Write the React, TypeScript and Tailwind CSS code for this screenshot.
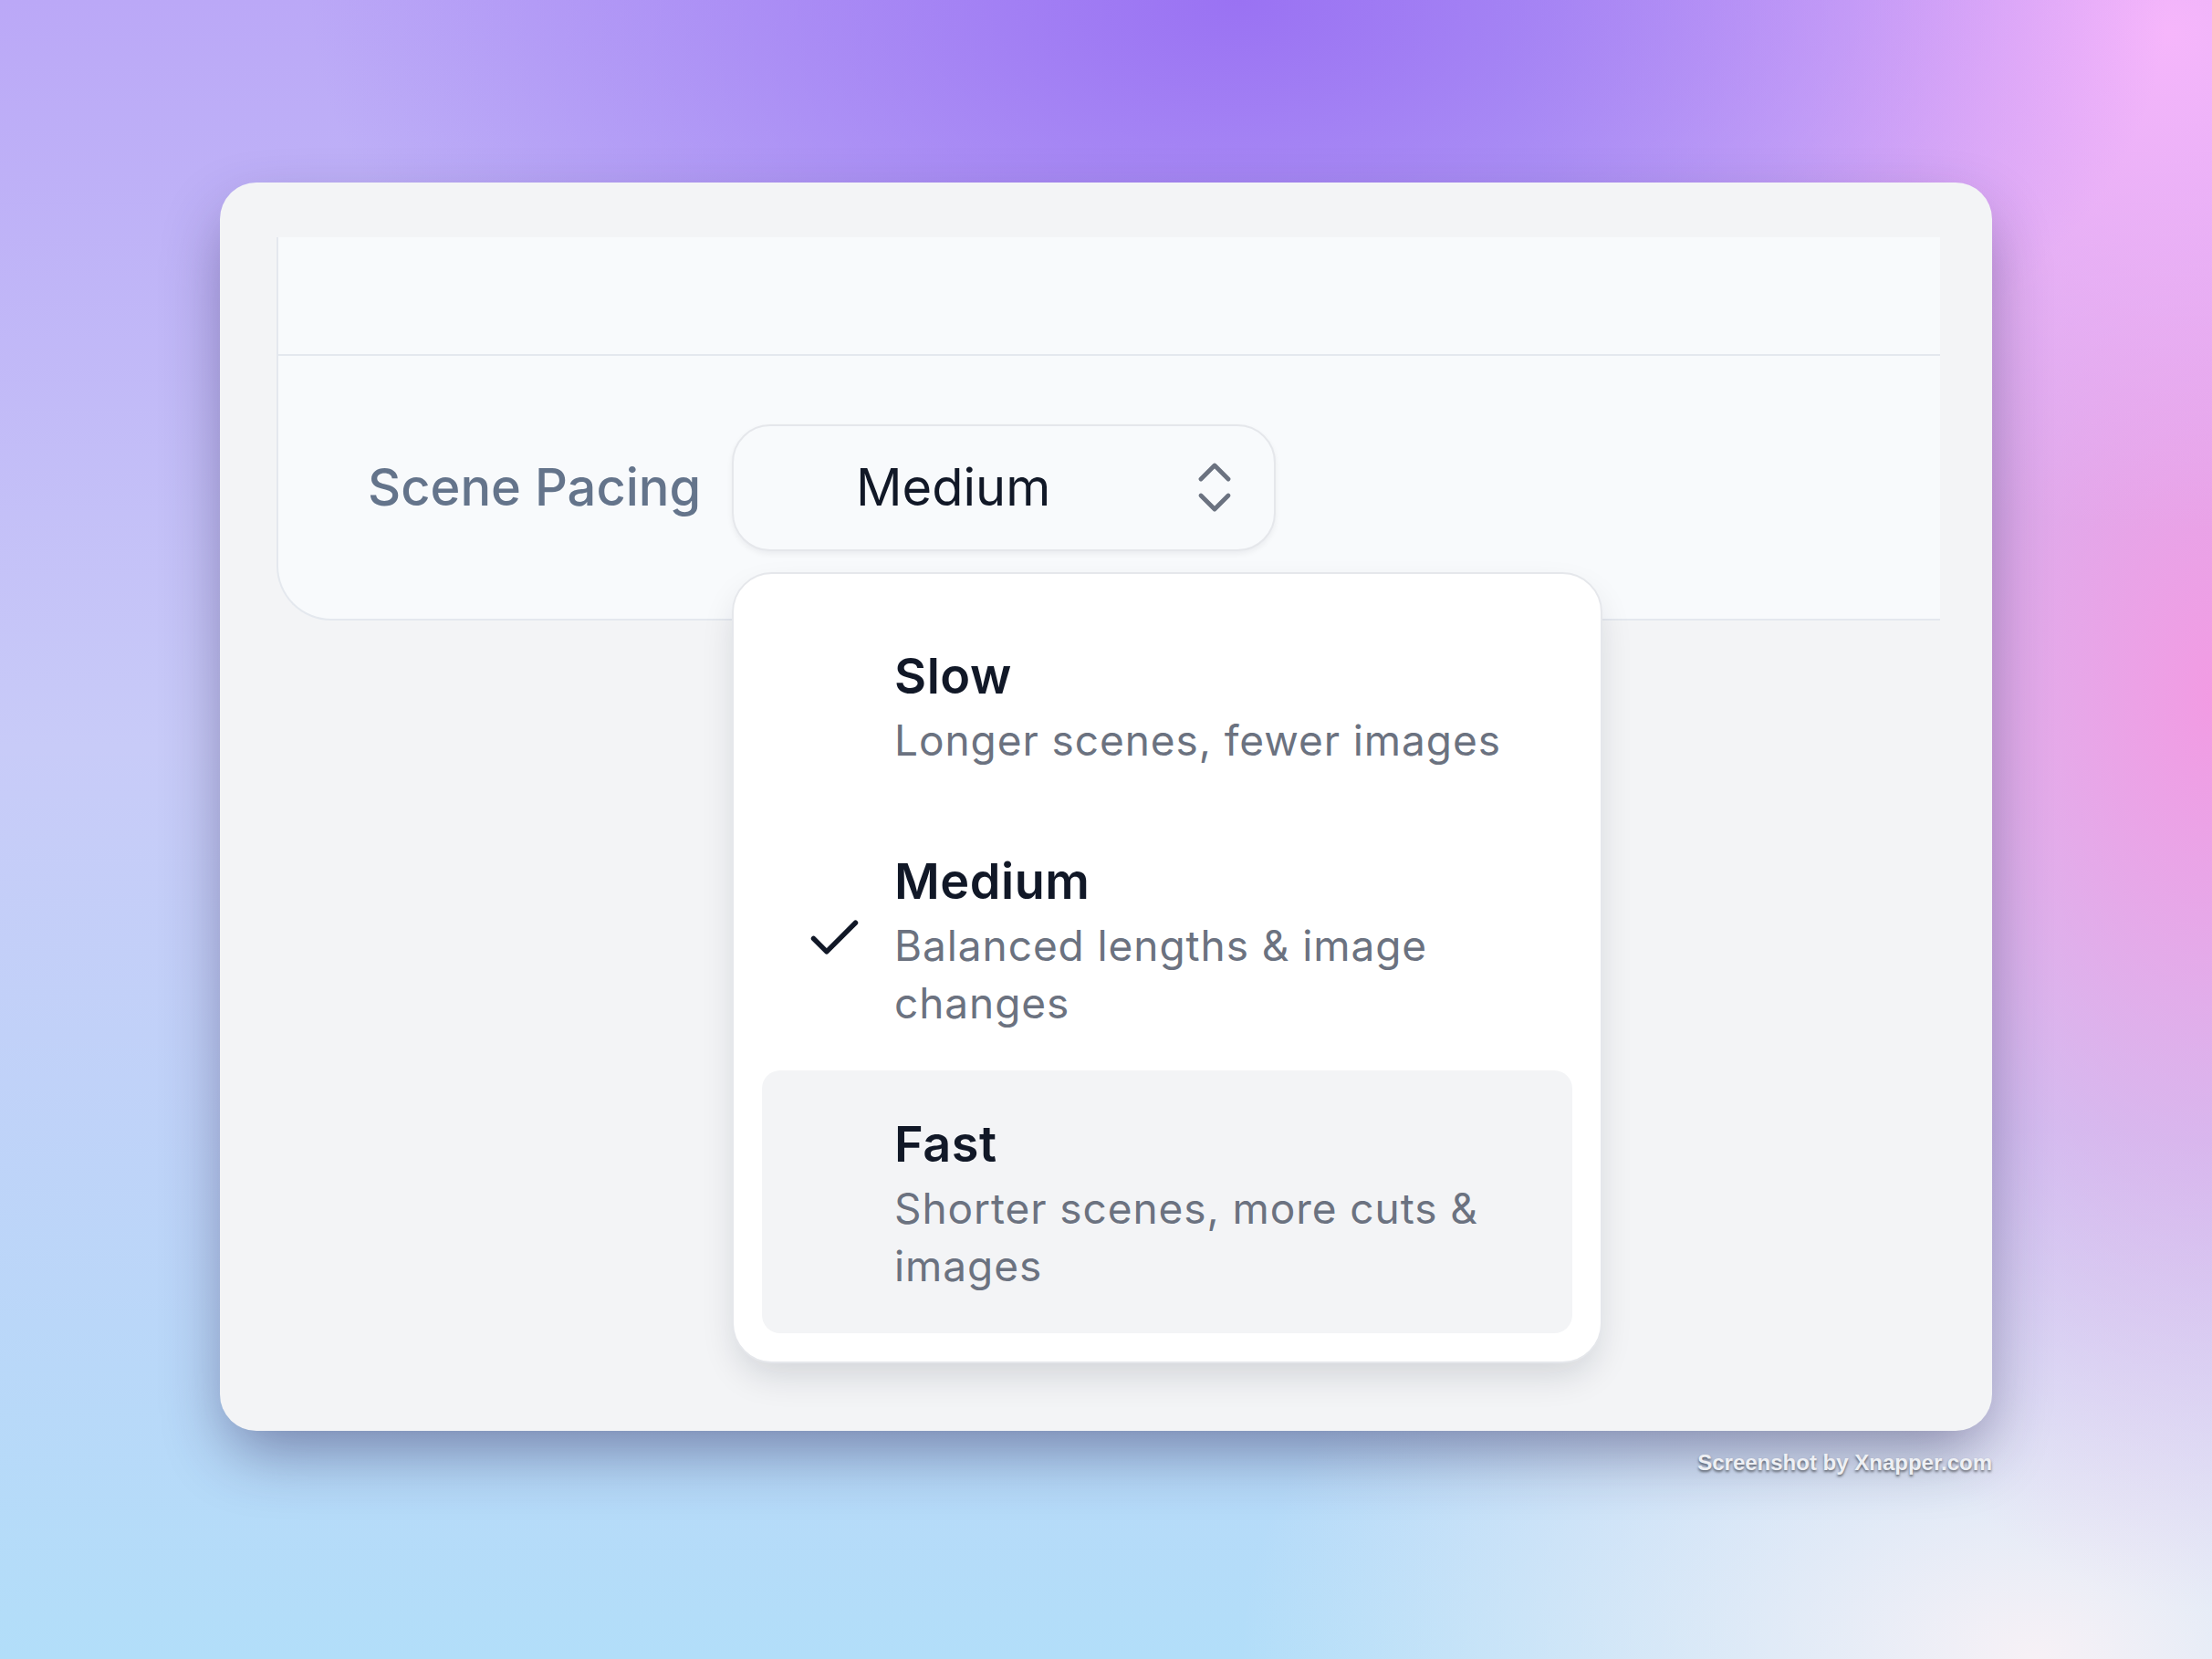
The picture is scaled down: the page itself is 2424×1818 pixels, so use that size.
import { Check, ChevronsUpDown } from 'lucide-react';

type PacingOption = {
  value: string;
  label: string;
  description: string;
};

const OPTIONS: PacingOption[] = [
  { value: 'slow', label: 'Slow', description: 'Longer scenes, fewer images' },
  { value: 'medium', label: 'Medium', description: 'Balanced lengths & image changes' },
  { value: 'fast', label: 'Fast', description: 'Shorter scenes, more cuts & images' },
];

const SELECTED = 'medium';
const HOVERED = 'fast';

function OptionRow({ option }: { option: PacingOption }) {
  const selected = option.value === SELECTED;
  const hovered = option.value === HOVERED;

  return (
    <div
      className={`flex items-center rounded-[20px] pl-[45px] pr-[36px] py-[42px] ${hovered ? 'bg-[#f3f4f6]' : ''}`}
    >
      <div className="w-[69px] h-[69px] shrink-0 flex items-center justify-center text-[#111827]">
        {selected && <Check size={69} strokeWidth={1.9} />}
      </div>
      <div className="ml-[31px] min-w-0">
        <div className="text-[54px] leading-[78px] font-semibold tracking-[0.01em] text-[#111827]">{option.label}</div>
        <div className="text-[46px] leading-[63px] tracking-[0.02em] text-[#6b7280]">{option.description}</div>
      </div>
    </div>
  );
}

function PacingSelect() {
  const current = OPTIONS.find(o => o.value === SELECTED);

  return (
    <div className="relative">
      <button className="flex items-center justify-between w-[596px] h-[139px] rounded-[42px] border-2 border-[#e5e7eb] bg-[#f8fafc] pl-[134px] pr-[29px] shadow-[0_3px_6px_rgba(15,23,42,0.06)]">
        <span className="text-[56px] leading-none text-[#111827]">{current?.label}</span>
        <ChevronsUpDown size={72} strokeWidth={1.6} className="text-[#6b7280]" />
      </button>

      <div className="absolute left-0 top-[162px] z-10 w-[954px] rounded-[44px] border-2 border-[#e5e7eb] bg-white p-[31px] shadow-[0_18px_40px_-8px_rgba(15,23,42,0.16)]">
        {OPTIONS.map(option => (
          <OptionRow key={option.value} option={option} />
        ))}
      </div>
    </div>
  );
}

export default function App() {
  return (
    <div className="w-[2424px] h-[1818px] overflow-hidden bg-[radial-gradient(ellipse_42%_32%_at_56%_0%,#9a72f3_0%,transparent_100%),radial-gradient(ellipse_30%_30%_at_98%_2%,#f6b6fb_0%,transparent_100%),radial-gradient(ellipse_24%_55%_at_100%_42%,#f29be3_0%,transparent_100%),radial-gradient(ellipse_36%_32%_at_92%_100%,#f7f1f6_0%,transparent_100%),linear-gradient(180deg,#bba8f7_0%,#c8cbf8_45%,#b2def9_100%)] pt-[200px] pl-[241px] font-['Inter',sans-serif]">
      <div className="w-[1942px]">
        <div className="h-[1368px] rounded-[40px] bg-[#f3f4f6] pt-[60px] pl-[62px] pr-[57px] shadow-[0_30px_70px_-10px_rgba(40,30,80,0.48)]">
          <div className="rounded-bl-[60px] border-l-2 border-b-2 border-[#e4e8ee] bg-[#f8fafc]">
            <div className="h-[130px] border-b-2 border-[#e4e8ee]" />
            <div className="h-[288px] flex items-center pl-[98px]">
              <div className="w-[399px] shrink-0 text-[56px] leading-none font-medium text-[#64748b]">
                Scene Pacing
              </div>
              <PacingSelect />
            </div>
          </div>
        </div>
        <div className="mt-[20px] text-right font-['Liberation_Sans',Arial,sans-serif] text-[24px] leading-[30px] font-bold text-[#eef0f4] [text-shadow:0_2px_3px_rgba(0,0,0,0.55)]">
          Screenshot by Xnapper.com
        </div>
      </div>
    </div>
  );
}
